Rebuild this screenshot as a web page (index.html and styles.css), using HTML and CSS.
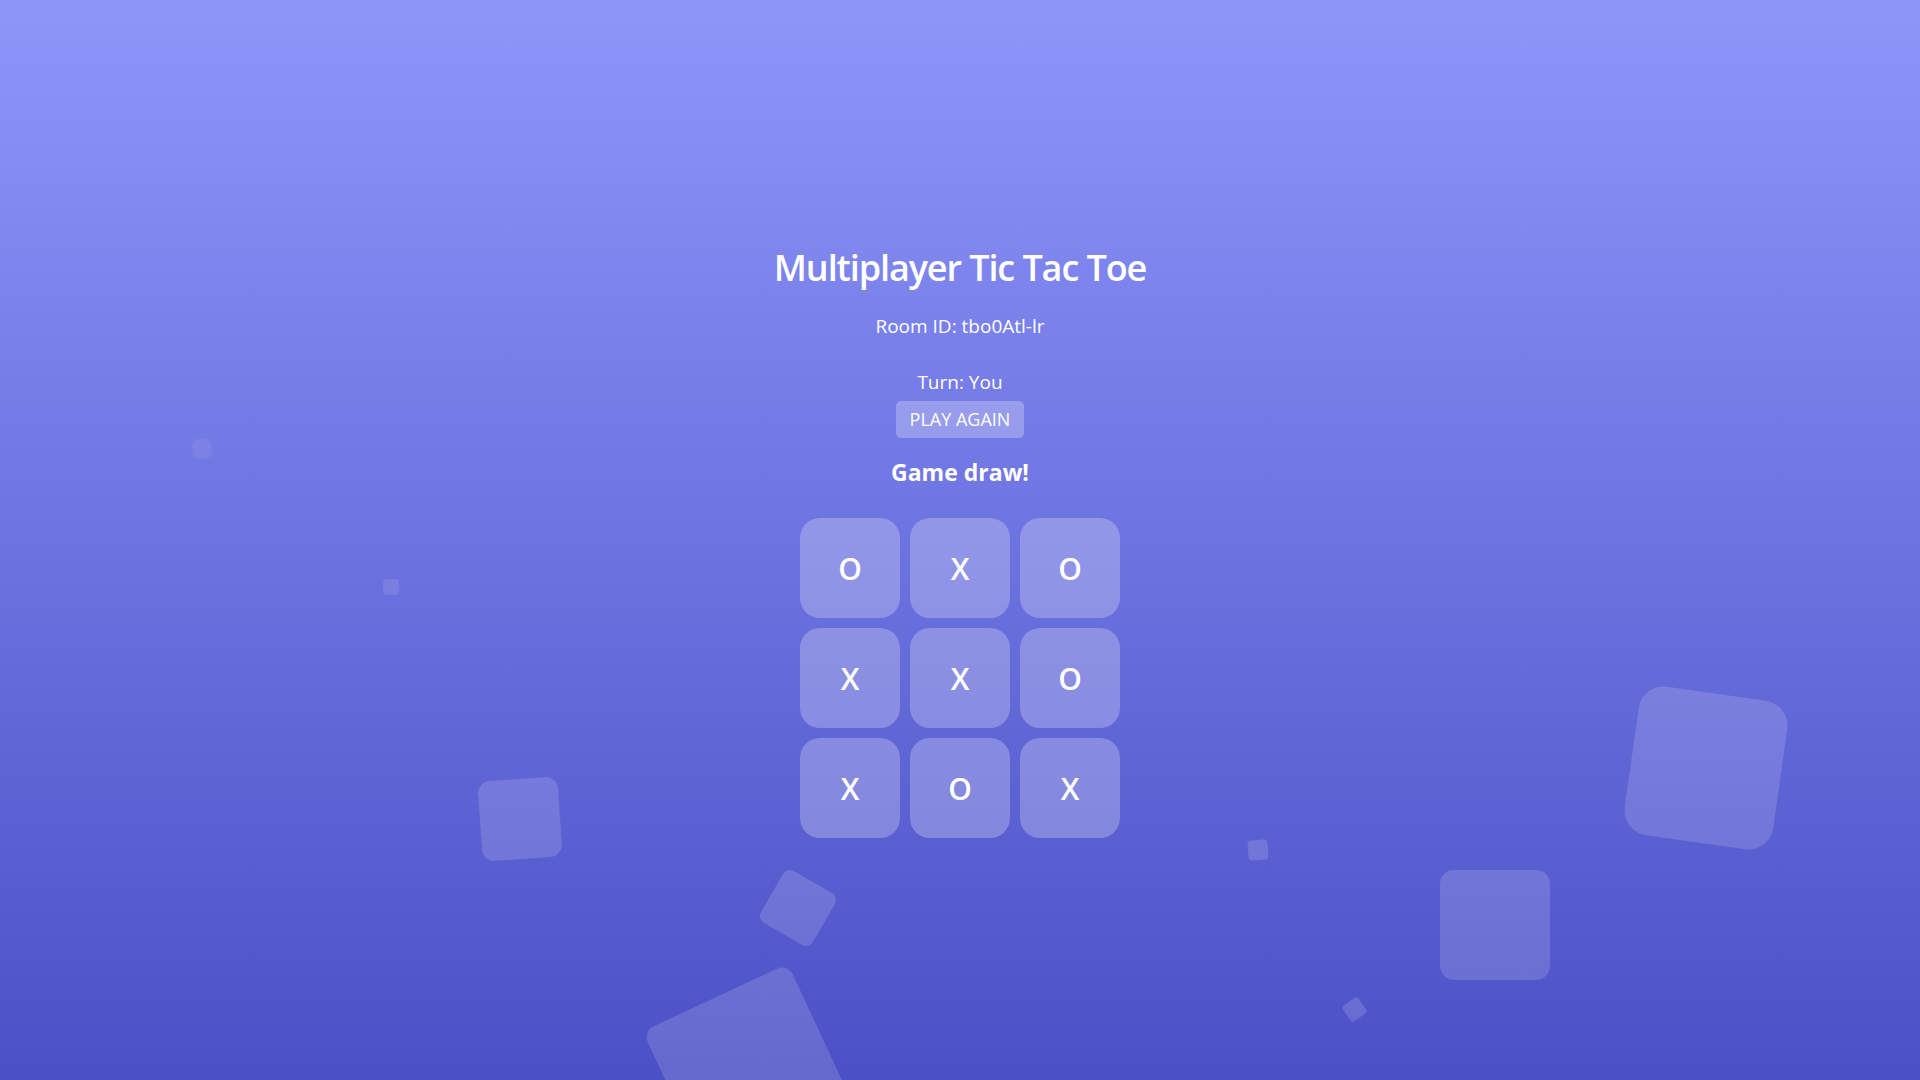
FILE: index.html
```html
<!DOCTYPE html>
<html lang="en">
<head>
<meta charset="utf-8">
<title>Multiplayer Tic Tac Toe</title>
<link rel="stylesheet" href="styles.css">
</head>
<body>
<div class="shapes" aria-hidden="true">
  <span class="shape s1"></span>
  <span class="shape s2"></span>
  <span class="shape s3"></span>
  <span class="shape s4"></span>
  <span class="shape s5"></span>
  <span class="shape s6"></span>
  <span class="shape s7"></span>
  <span class="shape s8"></span>
  <span class="shape s9"></span>
</div>
<main class="app">
  <h1 class="title">Multiplayer Tic Tac Toe</h1>
  <p class="room">Room ID: tbo0Atl-lr</p>
  <p class="turn">Turn: You</p>
  <button class="again">PLAY AGAIN</button>
  <h2 class="status">Game draw!</h2>
  <div class="board">
    <div class="cell">O</div>
    <div class="cell">X</div>
    <div class="cell">O</div>
    <div class="cell">X</div>
    <div class="cell">X</div>
    <div class="cell">O</div>
    <div class="cell">X</div>
    <div class="cell">O</div>
    <div class="cell">X</div>
  </div>
</main>
</body>
</html>
```

FILE: styles.css
```css
html, body {
  margin: 0;
  padding: 0;
  height: 100%;
}

body {
  background: linear-gradient(180deg, #8f96fa 0%, #4b50c6 100%);
  font-family: "Open Sans", "Noto Sans", sans-serif;
  color: #ffffff;
  overflow: hidden;
  position: relative;
}

.shapes {
  position: absolute;
  inset: 0;
  overflow: hidden;
  pointer-events: none;
}

.shape {
  position: absolute;
  display: block;
  background: rgba(255, 255, 255, 0.15);
}

.s1 { left: 192px; top: 439px; width: 20px; height: 20px; border-radius: 7px; background: rgba(255,255,255,0.07); filter: blur(1px); }
.s2 { left: 383px; top: 579px; width: 16px; height: 16px; border-radius: 4px; background: rgba(255,255,255,0.1); }
.s3 { left: 480px; top: 779px; width: 80px; height: 80px; border-radius: 12px; transform: rotate(-4deg); }
.s4 { left: 768px; top: 878px; width: 60px; height: 60px; border-radius: 8px; transform: rotate(30deg); }
.s5 { left: 669px; top: 990px; width: 160px; height: 160px; border-radius: 12px; transform: rotate(-25deg); }
.s6 { left: 1631px; top: 693px; width: 150px; height: 150px; border-radius: 25px; transform: rotate(8deg); }
.s7 { left: 1440px; top: 870px; width: 110px; height: 110px; border-radius: 14px; }
.s8 { left: 1248px; top: 840px; width: 20px; height: 20px; border-radius: 4px; transform: rotate(-4deg); }
.s9 { left: 1345px; top: 1000px; width: 19px; height: 19px; border-radius: 3px; transform: rotate(-35deg); }

.app {
  position: relative;
  display: flex;
  flex-direction: column;
  align-items: center;
  padding-top: 245px;
}

.title {
  margin: 0;
  font-size: 36px;
  line-height: 46px;
  font-weight: 600;
  letter-spacing: -1.1px;
}

.room {
  margin: 23px 0 0;
  font-size: 19px;
  line-height: 24px;
}

.turn {
  margin: 32px 0 0;
  font-size: 19px;
  line-height: 24px;
}

.again {
  margin: 7px 0 0;
  padding: 8px 14px;
  font-family: inherit;
  font-size: 18px;
  line-height: 21px;
  color: #ffffff;
  background: rgba(255, 255, 255, 0.25);
  border: none;
  border-radius: 5px;
  cursor: pointer;
}

.status {
  margin: 20px 0 0;
  font-size: 23px;
  line-height: 29px;
  font-weight: 700;
}

.board {
  margin-top: 31px;
  display: grid;
  grid-template-columns: repeat(3, 100px);
  grid-auto-rows: 100px;
  gap: 10px;
}

.cell {
  display: flex;
  align-items: center;
  justify-content: center;
  background: rgba(255, 255, 255, 0.25);
  border-radius: 20px;
  font-size: 30px;
  font-weight: 600;
}
```
